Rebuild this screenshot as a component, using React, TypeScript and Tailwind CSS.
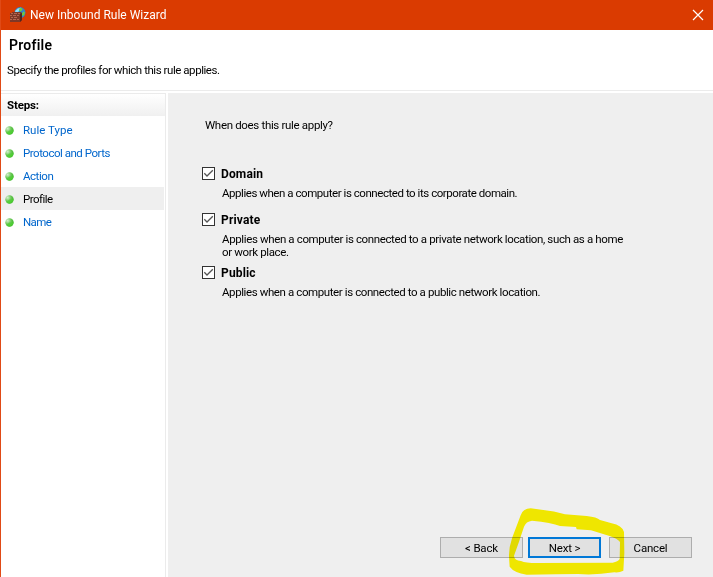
import React from "react";

const steps = [
  { label: "Rule Type", spacing: "tracking-[0.02px]" },
  { label: "Protocol and Ports", spacing: "tracking-[-0.48px]" },
  { label: "Action", spacing: "tracking-[-0.45px]" },
  { label: "Profile", spacing: "tracking-[-0.55px]", active: true },
  { label: "Name", spacing: "tracking-[-0.6px]" },
];

const profiles = [
  {
    name: "Domain",
    lines: ["Applies when a computer is connected to its corporate domain."],
    height: "h-[46px]",
    spacing: "tracking-[-0.45px]",
  },
  {
    name: "Private",
    lines: ["Applies when a computer is connected to a private network location, such as a home", "or work place."],
    height: "h-[53px]",
    spacing: "tracking-[-0.37px]",
  },
  {
    name: "Public",
    lines: ["Applies when a computer is connected to a public network location."],
    height: "h-[46px]",
    spacing: "tracking-[-0.4px]",
  },
];

function FirewallIcon() {
  return (
    <svg width="18" height="16" viewBox="0 0 18 16">
      <circle cx="11" cy="5.6" r="5.5" fill="#2f7fd0" />
      <path d="M6.5 3.5Q8.5 0.5 12 0.7L11.5 3 9 5H6z" fill="#8fdcf5" />
      <path d="M10.5 1.2L13 1l.6 2-2.1 1.6-1.6-.8zM14.3 4.5l1.6.6-.4 2.4-1.6 1.8-1.2-2z" fill="#6fca3f" />
      <path d="M1 6h2V5h9l1 1v7l-2 2H1z" fill="#7d3828" />
      <path d="M2 6.5h2M5 6.5h3M9 6.5h2M1 8.5h2M4 8.5h3M8 8.5h2M2 10.5h2M5 10.5h3M1 12.5h2M4 12.5h3M8 12.5h2" stroke="#b5654f" />
      <path d="M11 7l2-1v7l-2 2z" fill="#51251d" />
    </svg>
  );
}

function Bullet() {
  return (
    <svg className="relative top-[1px]" width="9" height="9" viewBox="0 0 9 9">
      <defs>
        <radialGradient id="ball" cx="0.28" cy="0.28" r="0.8">
          <stop offset="0" stopColor="#d5eed0" />
          <stop offset="0.5" stopColor="#6cc959" />
          <stop offset="1" stopColor="#38b522" />
        </radialGradient>
      </defs>
      <circle cx="4.5" cy="4.5" r="4.2" fill="url(#ball)" />
      <path d="M4.5 4.5h4A4 4 0 0 1 1.5 7z" fill="#50d134" opacity=".75" />
    </svg>
  );
}

function Checkbox() {
  return (
    <svg className="shrink-0" width="13" height="13" viewBox="0 0 13 13">
      <rect x=".5" y=".5" width="12" height="12" fill="#fff" stroke="#333" />
      <path d="M2.3 6.3L5 9l5.8-5.8" fill="none" stroke="#555" strokeWidth="1.3" />
    </svg>
  );
}

export default function App() {
  return (
    <div className="flex h-[577px] w-[713px] flex-col overflow-hidden border-l border-[#e04a16] bg-white font-['Roboto','Liberation_Sans',sans-serif] text-[11.5px] text-black">
      <header className="flex h-[30px] shrink-0 items-center bg-[#da3b01] pl-[8px] text-white">
        <FirewallIcon />
        <h1 className="ml-[3px] whitespace-nowrap text-[12px] leading-[15px] tracking-[0px]">New Inbound Rule Wizard</h1>
        <svg className="ml-auto mr-[9px]" width="12" height="12" viewBox="0 0 12 12">
          <path d="M1 1l10 10M11 1L1 11" stroke="white" strokeWidth="1.2" />
        </svg>
      </header>
      <section className="h-[61px] shrink-0 border-b border-[#ebebeb] pl-[6px] pt-[7px]">
        <h2 className="ml-[2px] text-[14px] font-semibold leading-[17px] tracking-[0.25px]">Profile</h2>
        <p className="mt-[9px] whitespace-nowrap leading-[14px] tracking-[-0.45px]">Specify the profiles for which this rule applies.</p>
      </section>
      <div className="flex min-h-0 flex-1 pt-[2px]">
        <aside className="w-[165px] shrink-0 border-r border-t border-[#ebebeb]">
          <h3 className="h-[22px] bg-gradient-to-b from-white to-[#f0f0f0] pl-[6px] font-bold leading-[22px] tracking-[-0.15px]">Steps:</h3>
          <ul className="mr-[1px] pt-[2px]">
            {steps.map((step) => (
              <li key={step.label} className={`flex h-[23px] items-center pl-[4px] ${step.active ? "bg-[#efefef] text-black" : "text-[#0066cc]"}`}>
                <Bullet />
                <span className={`ml-[9px] whitespace-nowrap pt-[2px] ${step.spacing}`}>{step.label}</span>
              </li>
            ))}
          </ul>
        </aside>
        <main className="ml-[2px] flex min-w-0 flex-1 flex-col bg-[#efefef] pl-[34px] pt-[25px]">
          <p className="ml-[3px] h-[49px] leading-[14px] tracking-[-0.33px]">When does this rule apply?</p>
          {profiles.map((profile) => (
            <section key={profile.name} className={profile.height}>
              <label className="flex h-[13px] items-center">
                <Checkbox />
                <strong className="ml-[6px] pt-[2px] text-[12px] leading-[13px] tracking-[0.15px]">{profile.name}</strong>
              </label>
              <div className={`ml-[20px] mt-[7px] whitespace-nowrap leading-[13px] ${profile.spacing}`}>
                {profile.lines.map((line) => (
                  <p key={line}>{line}</p>
                ))}
              </div>
            </section>
          ))}
          <footer className="relative mb-[19px] mr-[21px] mt-auto flex h-[21px] justify-end tracking-[-0.2px]">
            <button className="w-[83px] border border-[#adadad] bg-[#e1e1e1] leading-[20px]">&lt; Back</button>
            <button className="ml-[5px] w-[73px] border-2 border-[#0078d7] bg-[#e1e1e1] leading-[18px]">Next &gt;</button>
            <button className="ml-[8px] w-[83px] border border-[#adadad] bg-[#e1e1e1] leading-[20px]">Cancel</button>
            <svg className="pointer-events-none absolute right-[-21px] top-[-37px] mix-blend-multiply" width="283" height="77" viewBox="0 0 849 231">
              <path
                fill="#fff600"
                fillRule="evenodd"
                d="M237 170Q236 145 246 115L272 46Q278 26 302 25L340 30Q371 32 405 43L470 48Q501 51 510 60L545 70Q576 76 582 96L583 160L580 212Q567 219 553 217Q495 226 444 222L377 223L290 224Q252 218 239 200ZM252 167Q253 181 273 183Q287 189 320 189L548 188Q564 185 569 177L570 126Q561 116 541 109L483 91L440 88L438 81L390 78Q365 67 306 62Q288 64 282 80L267 125Z"
              />
            </svg>
          </footer>
        </main>
      </div>
    </div>
  );
}
